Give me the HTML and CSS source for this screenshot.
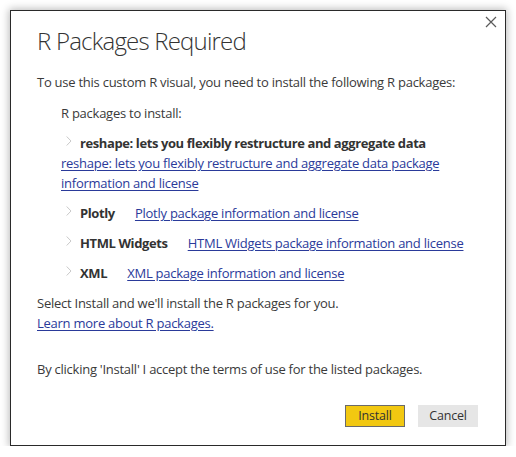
FILE: index.html
```html
<!DOCTYPE html>
<html>
<head>
<meta charset="utf-8">
<link rel="stylesheet" href="styles.css">
</head>
<body>
<div class="dialog">
  <button class="close" aria-label="Close">
    <svg width="12" height="12" viewBox="0 0 12 12"><path d="M1 1 L11 11 M11 1 L1 11" stroke="#5a5a5a" stroke-width="1.2" fill="none"/></svg>
  </button>
  <h1 class="title">R Packages Required</h1>
  <p class="intro">To use this custom R visual, you need to install the following R packages:</p>
  <div class="packages">
    <div class="pk-label">R packages to install:</div>
    <ul class="pk-list">
      <li class="pk-item"><svg class="chev" width="6" height="10" viewBox="0 0 6 10"><path d="M0.7 0.5 L5 5 L0.7 9.5" stroke="#c9c9c9" stroke-width="1" fill="none"/></svg><span class="pk-name">reshape: lets you flexibly restructure and aggregate data</span> <a href="#" class="pk-link">reshape: lets you flexibly restructure and aggregate data package information and license</a></li>
      <li class="pk-item"><svg class="chev" width="6" height="10" viewBox="0 0 6 10"><path d="M0.7 0.5 L5 5 L0.7 9.5" stroke="#c9c9c9" stroke-width="1" fill="none"/></svg><span class="pk-name">Plotly</span> <a href="#" class="pk-link">Plotly package information and license</a></li>
      <li class="pk-item"><svg class="chev" width="6" height="10" viewBox="0 0 6 10"><path d="M0.7 0.5 L5 5 L0.7 9.5" stroke="#c9c9c9" stroke-width="1" fill="none"/></svg><span class="pk-name">HTML Widgets</span> <a href="#" class="pk-link">HTML Widgets package information and license</a></li>
      <li class="pk-item"><svg class="chev" width="6" height="10" viewBox="0 0 6 10"><path d="M0.7 0.5 L5 5 L0.7 9.5" stroke="#c9c9c9" stroke-width="1" fill="none"/></svg><span class="pk-name">XML</span> <a href="#" class="pk-link">XML package information and license</a></li>
    </ul>
  </div>
  <p class="note">Select Install and we'll install the R packages for you.<br><a href="#" class="pk-link">Learn more about R packages.</a></p>
  <p class="terms">By clicking 'Install' I accept the terms of use for the listed packages.</p>
  <div class="actions">
    <button class="btn btn-primary">Install</button>
    <button class="btn btn-secondary">Cancel</button>
  </div>
</div>
</body>
</html>
```
FILE: styles.css
```css
html, body {
  margin: 0;
  padding: 0;
  background: #ffffff;
}

body {
  font-family: "Open Sans", "Noto Sans", sans-serif;
  font-size: 13px;
  letter-spacing: -0.25px;
  line-height: 20px;
  color: #3a3a3a;
}

.dialog {
  position: relative;
  margin: 10px 0 0 10px;
  width: 496px;
  box-sizing: border-box;
  border: 1px solid #2a2a2a;
  background: #fff;
  box-shadow: 0 0 8px 1px rgba(0, 0, 0, 0.28);
  padding: 15px 27px 18px 26px;
}

.close {
  position: absolute;
  top: 4px;
  right: 7px;
  width: 14px;
  height: 14px;
  padding: 0;
  border: 0;
  background: transparent;
  display: flex;
  align-items: center;
  justify-content: center;
}

.title {
  margin: 0;
  font-size: 24px;
  font-weight: 300;
  letter-spacing: -0.8px;
  line-height: 30px;
  color: #333;
}

.intro {
  margin: 16px 0 0;
}

.packages {
  padding-left: 24px;
}

.pk-label {
  margin-top: 11px;
}

.pk-list {
  list-style: none;
  margin: 0;
  padding: 0;
}

.pk-item {
  margin-top: 10px;
}

.chev {
  display: inline-block;
  vertical-align: 2px;
  margin-left: 5px;
  margin-right: 8px;
}

.pk-name {
  font-weight: 700;
  letter-spacing: -0.4px;
  color: #333;
  white-space: nowrap;
  margin-right: 17px;
}

.pk-link {
  color: #2a3a9a;
  text-decoration: underline;
  text-underline-offset: 2px;
}

.note {
  margin: 10px 0 0;
}

.terms {
  margin: 26px 0 0;
}

.actions {
  display: flex;
  justify-content: flex-end;
  gap: 13px;
  margin-top: 26px;
}

.btn {
  font-family: inherit;
  font-size: 12.5px;
  letter-spacing: -0.2px;
  color: #333;
  width: 60px;
  height: 22px;
  padding: 0;
  line-height: 20px;
  box-sizing: border-box;
}

.btn-primary {
  background: #f2c811;
  border: 1px solid #6a6a6a;
}

.btn-secondary {
  background: #e6e6e6;
  border: 1px solid #e6e6e6;
}
```
